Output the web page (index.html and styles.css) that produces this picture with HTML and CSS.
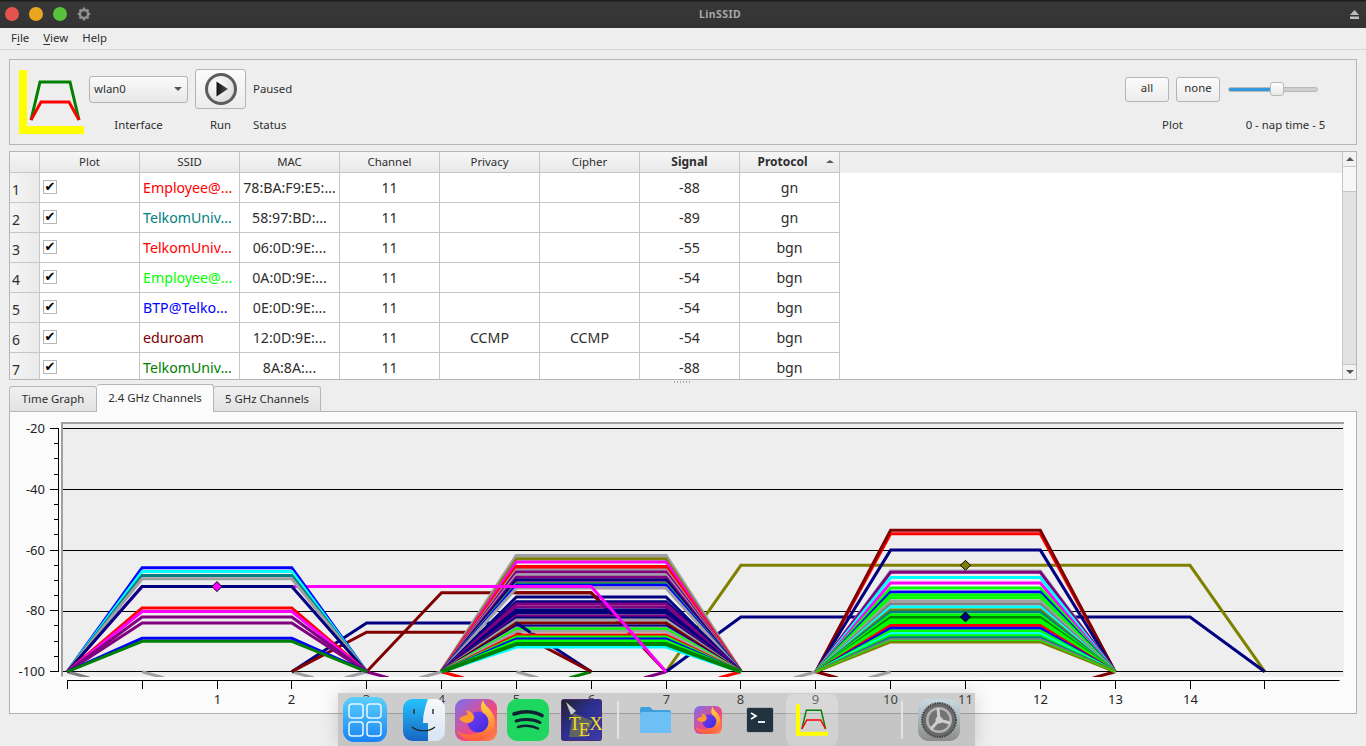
FILE: index.html
```html
<!DOCTYPE html>
<html lang="en">
<head>
<meta charset="utf-8">
<title>LinSSID</title>
<link rel="stylesheet" href="styles.css">
</head>
<body>
<header class="titlebar">
  <div class="lights">
    <span class="light red"></span><span class="light amber"></span><span class="light lime"></span>
    <svg class="gear" width="14" height="14" viewBox="0 0 14 14"><circle cx="7" cy="7" r="4.1" fill="none" stroke="#8e8e8e" stroke-width="2.6"/><path d="M7 .6v2.4M7 11v2.4M.6 7H3M11 7h2.4M2.5 2.5l1.7 1.7M9.8 9.8l1.7 1.7M2.5 11.500l1.700-1.700M9.800 4.200l1.700-1.700" stroke="#8e8e8e" stroke-width="2.200"/></svg>
  </div>
  <div class="wintitle">LinSSID</div>
  <div class="winright">
    <svg class="eject" width="9" height="9" viewBox="0 0 9 9"><path d="M4.500 0 9 5H0zM0 6.500h9V9H0z" fill="#bdbdbd"/></svg>
  </div>
</header>
<nav class="menubar"><span>F<u>i</u>le</span><span><u>V</u>iew</span><span>Help</span></nav>

<section class="toolbox">
  <svg class="logo" width="65" height="64" viewBox="0 0 65 64"><path d="M0 0h8v56h57v8H0z" fill="#ff0"/><path d="M12 50 21 12h30l9 38" fill="none" stroke="#008000" stroke-width="3"/><path d="M12 50 22 32h28l10 18" fill="none" stroke="#f00" stroke-width="3"/></svg>
  <div class="combo"><span>wlan0</span><i class="arrow"></i></div>
  <button class="runbtn" type="button">
    <svg width="34" height="34" viewBox="0 0 34 34"><defs><radialGradient id="rb" cx=".4" cy=".35" r=".75"><stop offset="0" stop-color="#fff"/><stop offset="1" stop-color="#d6d6d6"/></radialGradient><linearGradient id="rt" x1="0" y1="0" x2="1" y2="0"><stop offset="0" stop-color="#111"/><stop offset="1" stop-color="#555"/></linearGradient></defs><circle cx="17" cy="17" r="14.500" fill="url(#rb)" stroke="#5c5c5c" stroke-width="3"/><path d="M12.500 9.500 24 17l-11.500 7.500z" fill="url(#rt)"/></svg>
  </button>
  <div class="status">Paused</div>
  <div class="spacer"></div>
  <div class="plotbtns"><button type="button">all</button><button type="button">none</button></div>
  <div class="slider"><div class="fill"></div><div class="knob"></div></div>
  <div class="lab">Interface</div>
  <div class="lab">Run</div>
  <div class="lab left">Status</div>
  <div></div>
  <div class="lab">Plot</div>
  <div class="lab">0 - nap time - 5</div>
</section>

<section class="tableframe">
  <div class="tablewrap">
    <table class="grid">
      <colgroup><col class="c0"><col><col><col><col><col><col><col><col></colgroup>
      <thead>
        <tr><th></th><th>Plot</th><th>SSID</th><th>MAC</th><th>Channel</th><th>Privacy</th><th>Cipher</th><th class="b">Signal</th><th class="b sorted">Protocol<i class="sort"></i></th></tr>
      </thead>
      <tbody>
        <tr><th>1</th><td class="chk"><span class="box">✔</span></td><td class="ssid red">Employee@...</td><td>78:BA:F9:E5:...</td><td>11</td><td></td><td></td><td>-88</td><td>gn</td></tr>
        <tr><th>2</th><td class="chk"><span class="box">✔</span></td><td class="ssid teal">TelkomUniv...</td><td>58:97:BD:...</td><td>11</td><td></td><td></td><td>-89</td><td>gn</td></tr>
        <tr><th>3</th><td class="chk"><span class="box">✔</span></td><td class="ssid red">TelkomUniv...</td><td>06:0D:9E:...</td><td>11</td><td></td><td></td><td>-55</td><td>bgn</td></tr>
        <tr><th>4</th><td class="chk"><span class="box">✔</span></td><td class="ssid lime">Employee@...</td><td>0A:0D:9E:...</td><td>11</td><td></td><td></td><td>-54</td><td>bgn</td></tr>
        <tr><th>5</th><td class="chk"><span class="box">✔</span></td><td class="ssid blue">BTP@Telko...</td><td>0E:0D:9E:...</td><td>11</td><td></td><td></td><td>-54</td><td>bgn</td></tr>
        <tr><th>6</th><td class="chk"><span class="box">✔</span></td><td class="ssid maroon">eduroam</td><td>12:0D:9E:...</td><td>11</td><td>CCMP</td><td>CCMP</td><td>-54</td><td>bgn</td></tr>
        <tr><th>7</th><td class="chk"><span class="box">✔</span></td><td class="ssid green">TelkomUniv...</td><td>8A:8A:...</td><td>11</td><td></td><td></td><td>-88</td><td>bgn</td></tr>
      </tbody>
    </table>
  </div>
  <div class="vscroll">
    <div class="sbtn"><i class="up"></i></div>
    <div class="thumb"></div>
    <div class="track"></div>
    <div class="sbtn"><i class="down"></i></div>
  </div>
</section>
<div class="splitter"><span></span></div>

<div class="tabs">
  <div class="tab">Time Graph</div>
  <div class="tab active">2.4 GHz Channels</div>
  <div class="tab">5 GHz Channels</div>
</div>
<main class="pane">
  <svg id="chart" class="chart" width="1346" height="301" viewBox="10 412 1346 301"></svg>
</main>

<aside class="dock">
  <svg class="di launch" width="44" height="45" viewBox="0 0 44 45"><defs><linearGradient id="lp" x1="0" y1="0" x2="0" y2="1"><stop offset="0" stop-color="#5ad0fc"/><stop offset="1" stop-color="#1a84f4"/></linearGradient></defs><rect width="44" height="45" rx="11" fill="url(#lp)"/><g fill="none" stroke="#e8f6ff" stroke-width="1.500"><rect x="6" y="7" width="14" height="14" rx="3"/><rect x="24" y="7" width="14" height="14" rx="3"/><rect x="6" y="25" width="14" height="14" rx="3"/><rect x="24" y="25" width="14" height="14" rx="3"/></g></svg>
  <svg class="di finder" width="42" height="42" viewBox="0 0 42 42"><defs><linearGradient id="fl" x1="0" y1="0" x2="0" y2="1"><stop offset="0" stop-color="#25c3fb"/><stop offset="1" stop-color="#1766c4"/></linearGradient><linearGradient id="fr" x1="0" y1="0" x2="0" y2="1"><stop offset="0" stop-color="#f8f8f8"/><stop offset="1" stop-color="#d6e4f4"/></linearGradient></defs><rect width="42" height="42" rx="9" fill="url(#fr)"/><path d="M9 0h16c-3 8-5 15-5 24h5v18H9a9 9 0 0 1-9-9V9a9 9 0 0 1 9-9z" fill="url(#fl)"/><path d="M11 10v5M30 10v5" stroke="#333" stroke-width="1.500"/><path d="M9 28c6 5 17 5 23 0" fill="none" stroke="#222" stroke-width="1.200"/></svg>
  <svg class="di fox" width="42" height="42" viewBox="0 0 42 42"><use href="#foxicon"/></svg>
  <svg class="di spot" width="42" height="42" viewBox="0 0 42 42"><rect width="42" height="42" rx="10" fill="#1ed760"/><g fill="none" stroke="#123" stroke-linecap="round"><path d="M7 15c9-3 20-3 28 1.500" stroke-width="3.600"/><path d="M9 22c8-2 17-2 24 1.500" stroke-width="3"/><path d="M11 28c7-2 14-1.500 20 1.500" stroke-width="2.500"/></g></svg>
  <svg class="di tex" width="41" height="42" viewBox="0 0 41 42"><defs><linearGradient id="tx" x1="0" y1="0" x2="1" y2="1"><stop offset="0" stop-color="#222"/><stop offset=".45" stop-color="#2b2f8f"/><stop offset="1" stop-color="#3d3aa8"/></linearGradient></defs><rect x=".5" y=".5" width="40" height="41" rx="2" fill="url(#tx)" stroke="#4d2a78"/><path d="M5 3l10 9-5 4z" fill="#c9c9c9"/><path d="M12 14l20 8-8 16H8z" fill="#8a8a3a" opacity=".55"/><text x="8" y="31" class="textt">T<tspan dx="-2" dy="6">E</tspan><tspan dx="-1" dy="-6">X</tspan></text></svg>
  <i class="dsep first"></i>
  <svg class="di folder" width="31" height="26" viewBox="0 0 31 26"><path d="M2 0h8l3 3h16a2 2 0 0 1 2 2v19a2 2 0 0 1-2 2H2a2 2 0 0 1-2-2V2a2 2 0 0 1 2-2z" fill="#3f9fdc"/><rect y="5" width="31" height="21" rx="2" fill="#6cc0f5"/></svg>
  <svg class="di fox2" width="28" height="28" viewBox="0 0 42 42"><use href="#foxicon"/></svg>
  <svg class="di term" width="28" height="26" viewBox="0 0 28 26"><rect x=".5" y=".5" width="27" height="25" rx="2" fill="#22323f" stroke="#aab4bd"/><path d="M5 6l5 3-5 3" fill="none" stroke="#fff" stroke-width="1.600"/><path d="M12 15h7" stroke="#fff" stroke-width="1.800"/></svg>
  <div class="activeapp"><svg width="32" height="32" viewBox="0 0 65 64"><path d="M0 0h8v56h57v8H0z" fill="#ff0"/><path d="M12 50 21 12h30l9 38" fill="none" stroke="#008000" stroke-width="3"/><path d="M12 50 22 32h28l10 18" fill="none" stroke="#f00" stroke-width="3"/></svg></div>
  <i class="dsep second"></i>
  <svg class="di prefs" width="42" height="42" viewBox="0 0 42 42"><defs><linearGradient id="pf" x1="0" y1="0" x2="0" y2="1"><stop offset="0" stop-color="#c8dbe2"/><stop offset="1" stop-color="#8b8b8b"/></linearGradient></defs><rect width="42" height="42" rx="10" fill="url(#pf)"/><circle cx="21" cy="21" r="17" fill="#6a6a6a" stroke="#444" stroke-width="2" stroke-dasharray="1.500 1"/><circle cx="21" cy="21" r="13" fill="#b4b4b4"/><circle cx="21" cy="21" r="10.500" fill="#737373"/><path d="M21 21l-1-12M21 21l11 3M21 21l-8 9" stroke="#cfcfcf" stroke-width="3"/><circle cx="21" cy="21" r="3.500" fill="#cfcfcf"/></svg>
  <svg class="defs" width="0" height="0"><defs>
    <linearGradient id="fxb" x1="0" y1="0" x2="1" y2="1"><stop offset="0" stop-color="#7a6ff0"/><stop offset=".6" stop-color="#f2487e"/><stop offset="1" stop-color="#ff8a3c"/></linearGradient>
    <linearGradient id="fxf" x1="0" y1="0" x2="0" y2="1"><stop offset="0" stop-color="#ffdf3d"/><stop offset="1" stop-color="#ff5a3c"/></linearGradient>
    <linearGradient id="fxc" x1="0" y1="0" x2="1" y2="1"><stop offset="0" stop-color="#7c3cf0"/><stop offset="1" stop-color="#3a2be0"/></linearGradient>
    <g id="foxicon"><rect width="42" height="42" rx="9" fill="url(#fxb)"/><path d="M28 1c1 5 5 7 8 11 5 7 5 16 0 22-4 5-10 8-16 8-8 0-14-4-18-10 5 3 11 5 18 3 7-2 11-8 10-15-1-6-4-8-4-12 0-3 1-5 2-7z" fill="url(#fxf)"/><circle cx="23" cy="23" r="10.500" fill="url(#fxc)"/><path d="M4 20c3-3 6-4 9-4l-2-5c4 1 7 3 8 6 1 3-2 7-6 7-4 0-7-2-9-4z" fill="#ff9a2c"/></g>
  </defs></svg>
</aside>
<script src="chart.js"></script>
</body>
</html>
```

FILE: styles.css
```css
* { box-sizing: border-box; }
html, body { margin: 0; height: 746px; overflow: hidden; }
body { background: #eee; font: 11.4px "Noto Sans", sans-serif; color: #2e2e2e; position: relative; }
u { text-underline-offset: 2px; }
button { font: inherit; color: inherit; }

.titlebar { height: 28px; background: linear-gradient(#2a2a2a, #383838 8%, #333); border-top: 1px solid #1c1c1c; display: flex; align-items: center; padding: 0 7px 1px 5px; }
.lights { flex: 1; display: flex; align-items: center; gap: 10px; }
.light { width: 14px; height: 14px; border-radius: 50%; }
.light.red { background: #e5534f; }
.light.amber { background: #e9a51f; }
.light.lime { background: #57c13c; }
.wintitle { font-size: 10.5px; font-weight: 700; color: #a8a8a8; letter-spacing: .4px; margin-left: 76px; }
.winright { flex: 1; display: flex; justify-content: flex-end; }

.menubar { height: 22px; border-bottom: 1px solid #d6d6d6; display: flex; gap: 14px; padding: 0 0 0 11px; line-height: 20px; }
.menubar span { display: block; }

.toolbox { margin: 9px 9px 0; height: 86px; border: 1px solid #b6b6b6; padding: 9px 12px 0 9px; display: grid; grid-template-columns: 63px 99px 51px auto 1fr 95px 117px; grid-template-rows: 40px 22px; column-gap: 7px; row-gap: 4px; align-items: center; }
.logo { grid-row: 1 / 3; align-self: start; margin-top: 1px; overflow: visible; }
.combo { height: 27px; border: 1px solid #b4b4b4; border-radius: 3px; background: linear-gradient(#fafafa, #e8e8e8); display: flex; align-items: center; justify-content: space-between; padding: 0 5px 2px 4px; }
.arrow { width: 0; height: 0; border: 4px solid transparent; border-top: 4px solid #555; border-bottom: 0; margin-top: 2px; }
.status { padding-bottom: 2px; }
.runbtn { height: 40px; padding: 0; border: 1px solid #b4b4b4; border-radius: 3px; background: linear-gradient(#fbfbfb, #ececec); display: flex; align-items: center; justify-content: center; }
.plotbtns { display: flex; gap: 7px; }
.plotbtns button { width: 45px; height: 25px; padding: 0 0 3px; border: 1px solid #b4b4b4; border-radius: 3px; background: linear-gradient(#fbfbfb, #ececec); }
.slider { width: 90px; height: 5px; margin-left: 1px; background: #cfcfcf; border: 1px solid #b8b8b8; border-radius: 3px; position: relative; }
.fill { width: 44px; height: 100%; background: #3398dc; border-radius: 3px; }
.knob { position: absolute; left: 41px; top: -6px; width: 14px; height: 14px; background: linear-gradient(#fff, #e8e8e8); border: 1px solid #b8b8b8; border-radius: 3px; }
.lab { text-align: center; white-space: nowrap; }
.lab.left { text-align: left; }

.tableframe { margin: 6px 9px 0; height: 229px; border: 1px solid #b6b6b6; display: flex; overflow: hidden; }
.tablewrap { flex: 1; overflow: hidden; background: linear-gradient(#eee 21px, #fff 21px); }
.grid { border-collapse: separate; border-spacing: 0; table-layout: fixed; width: 830px; font-size: 14.2px; }
.c0 { width: 30px; }
.grid thead th { height: 21px; font-size: 11.4px; font-weight: 400; padding: 0 0 2px; background: linear-gradient(#f6f6f6, #e9e9e9); border-right: 1px solid #c6c6c6; border-bottom: 1px solid #c6c6c6; position: relative; }
.grid thead th.b { font-size: 12px; font-weight: 700; }
.grid thead th.sorted { padding-right: 14px; }
.sort { position: absolute; right: 5px; top: 8px; width: 0; height: 0; border: 4px solid transparent; border-bottom: 3px solid #555; border-top: 0; }
.grid td, .grid tbody th { height: 30px; padding: 0; border-right: 1px solid #c6c6c6; border-bottom: 1px solid #c6c6c6; text-align: center; white-space: nowrap; overflow: hidden; font-weight: 400; }
.grid tbody th { background: linear-gradient(90deg, #f4f4f4, #eaeaea); text-align: left; padding: 3px 0 0 2px; font-size: 14px; }
.grid td.ssid { text-align: left; padding-left: 3px; }
.red { color: #f00; } .teal { color: #008080; } .lime { color: #0f0; } .blue { color: #00f; } .maroon { color: #800000; } .green { color: #008000; }
.grid td.chk { text-align: left; padding-left: 3px; }
.box { display: block; width: 14px; height: 14px; border: 1px solid #b8b8b8; background: #fff; color: #000; font: 13px/12px "DejaVu Sans", sans-serif; text-align: center; margin-top: -1px; }

.vscroll { width: 14px; border-left: 1px solid #c6c6c6; display: flex; flex-direction: column; }
.sbtn { height: 14px; background: #f2f2f2; display: flex; align-items: center; justify-content: center; flex: none; }
.up { width: 0; height: 0; border: 4px solid transparent; border-bottom: 4px solid #555; border-top: 0; }
.down { width: 0; height: 0; border: 4px solid transparent; border-top: 4px solid #555; border-bottom: 0; }
.thumb { height: 26px; flex: none; background: #f7f7f7; border: solid #c6c6c6; border-width: 1px 0; }
.track { flex: 1; background: #e2e2e2; border-bottom: 1px solid #c6c6c6; }

.splitter { height: 4px; display: flex; justify-content: center; align-items: flex-start; padding-top: 1px; }
.splitter span { width: 18px; height: 2px; background: repeating-linear-gradient(90deg, #aaa 0 1px, transparent 1px 3px); }

.tabs { display: flex; height: 28px; padding-left: 9px; align-items: flex-end; position: relative; z-index: 1; margin-bottom: -1px; }
.tab { width: 107px; height: 26px; padding-top: 4px; text-align: center; background: linear-gradient(#f0f0f0, #e2e2e2); border: 1px solid #b6b6b6; border-left: 0; border-radius: 3px 3px 0 0; }
.tab:first-child { width: 88px; border-left: 1px solid #b6b6b6; }
.tab.active { width: 117px; height: 28px; padding-top: 5px; background: #fbfbfb; border-bottom: 0; }

.pane { margin: 0 9px; height: 303px; background: #fbfbfb; border: 1px solid #b0b0b0; }
.chart { display: block; }
.chart text { font: 13px "Noto Sans", sans-serif; fill: #222; }

.dock { position: absolute; left: 338px; top: 693px; width: 637px; height: 53px; display: flex; align-items: center; background: rgba(120, 120, 120, .35); box-shadow: 0 0 18px rgba(0, 0, 0, .16); }
.di { flex: none; display: block; }
.launch { margin-left: 5px; }
.finder { margin-left: 16px; }
.fox { margin-left: 10px; }
.spot { margin-left: 10px; }
.tex { margin-left: 12px; }
.dsep { flex: none; width: 2px; height: 38px; background: #e3e3e3; }
.dsep.first { margin-left: 15px; }
.folder { margin-left: 21px; }
.fox2 { margin-left: 23px; }
.term { margin-left: 24px; }
.activeapp { margin-left: 12px; width: 52px; height: 52px; margin-top: 1px; background: rgba(255, 255, 255, .22); border-radius: 8px; display: flex; align-items: center; justify-content: center; }
.dsep.second { margin-left: 63px; }
.prefs { margin-left: 15px; }
.defs { position: absolute; }
.textt { font: 19px "Liberation Serif", serif !important; fill: #f2d92a !important; }
```

FILE: chart.js
```js
// Draws the 2.4 GHz channel plot: one trapezoid per access point.
var NS = 'http://www.w3.org/2000/svg';
var svg = document.getElementById('chart');
var C = { r:'#ff0000', g:'#00ff00', b:'#0000ff', c:'#00ffff', m:'#ff00ff', dr:'#800000', dg:'#008000', n:'#000080', t:'#008080', p:'#800080', o:'#808000', gy:'#a0a0a4', dg2:'#808080' };
function X(c) { return 142.1 + 74.85 * c; }
function Y(db) { return 428.5 + (-20 - db) * 3.04; }
function el(name, attrs, parent) {
  var e = document.createElementNS(NS, name);
  for (var k in attrs) e.setAttribute(k, attrs[k]);
  (parent || svg).appendChild(e);
  return e;
}
var defs = el('defs', {});
var clip = el('clipPath', { id: 'plotclip' }, defs);
el('rect', { x: 63, y: 424, width: 1281, height: 253 }, clip);

// plot background and frame
el('rect', { x: 63, y: 424, width: 1281, height: 252.5, fill: '#eeeeee' });
el('path', { d: 'M62 676.5V423H1344', fill: 'none', stroke: '#a0a0a0', 'stroke-width': 2 });

// grid
[428, 489, 550, 611, 671].forEach(function (y) {
  el('path', { d: 'M63 ' + (y + .5) + 'H1343', stroke: '#000', 'stroke-width': 1 });
});

// left axis
var ax = 'M58.5 428V672';
for (var i = 0; i <= 16; i++) {
  var y = Math.round(428 + i * 15.19) + .5;
  ax += 'M' + (i % 4 === 0 ? 50 : 54) + ' ' + y + 'H59';
}
el('path', { d: ax, stroke: '#000', 'stroke-width': 1, fill: 'none' });
[-20, -40, -60, -80, -100].forEach(function (v, n) {
  var t = el('text', { x: 45, y: 433 + n * 60.8, 'text-anchor': 'end' });
  t.textContent = v;
});

// bottom axis
var bx = 'M67 680.5H1339.500';
for (var c = -1; c <= 15; c++) {
  var x = Math.round(X(c) - .45) + .5;
  bx += 'M' + x + ' 680V689';
  if (c >= 1 && c <= 14) {
    var tx = el('text', { x: x, y: 703.5, 'text-anchor': 'middle' });
    tx.textContent = c;
  }
}
el('path', { d: bx, stroke: '#000', 'stroke-width': 1, fill: 'none' });

var plot = el('g', { 'clip-path': 'url(#plotclip)', fill: 'none', 'stroke-width': 3, 'stroke-linejoin': 'miter' });
function line(pts, col, w) {
  el('polyline', { points: pts.map(function (p) { return p[0].toFixed(1) + ',' + p[1].toFixed(1); }).join(' '), stroke: C[col] || col, 'stroke-width': w || 3 }, plot);
}
function trap(c, db, col, w) {
  line([[X(c - 2), Y(-100)], [X(c - 1), Y(db)], [X(c + 1), Y(db)], [X(c + 2), Y(-100)]], col, w);
}
function wide(c0, c1, db, col) {
  line([[X(c0), Y(-100)], [X(c0 + 1), Y(db)], [X(c1 - 1), Y(db)], [X(c1), Y(-100)]], col);
}
function stub(c, dx, col) {
  line([[X(c), Y(-100)], [X(c) + dx, Y(-100) + Math.abs(dx) * .28]], col);
}

// clipped stubs of the weakest networks, below the -100 line
[[-1, 22, 'dg2'], [0, 22, 'gy'], [2, 22, 'gy'], [3, -22, 'gy'], [3, 22, 'p'], [4, -22, 'gy'], [4, 22, 'r'], [5, 22, 'gy'], [6, -22, 'dg'], [7, -22, 'p'], [8, -22, 'r'], [9, -22, 'gy'], [9, 22, 'dr'], [10, -22, 'gy'], [13, -22, 'dr']].forEach(function (s) {
  stub(s[0], s[1], s[2]);
});

// neighbours of channel 6, underneath it
wide(7, 15, -65, 'o');
wide(7, 15, -82, 'n');
trap(4, -84, 'n');
trap(4, -87, 'dr');
trap(5, -74, 'dr');

// channel 6
[[-61.9, 'gy', 4], [-62.9, 'o'], [-63.9, 'm'], [-65.6, 'r', 4], [-66.5, 'gy'], [-67.2, 'p'], [-68.2, 'gy'], [-68.9, 'p'], [-69.8, 'n'], [-70.8, 'p'], [-71.2, 'g'], [-71.5, 'b'], [-72.5, 'gy'], [-75.4, 'n'], [-77, 'n'], [-77.7, 'p'], [-78.7, 'p'], [-79.7, 'n'], [-80.7, 'n'], [-81.7, 'p'], [-82.3, 'n'], [-83, 'gy'], [-84, 'dr'], [-85, 'n'], [-85.6, 'gy'], [-86, 'g'], [-86.7, 'gy'], [-87.9, 'r'], [-88.6, 'g'], [-89.2, 'b'], [-89.9, 'g'], [-91.9, 'c'], [-90.9, 'dg', 4]].forEach(function (l) { trap(6, l[0], l[1], l[2]); });

// the parts of channel 5 and channel 4 that lie over channel 6
line([[X(4) + 75, Y(-74)], [X(6), Y(-74)], [X(6) + 8, Y(-74) + 8]], 'dr');
line([[X(5), Y(-84)], [X(5) + 14, Y(-84) + 9.5]], 'n');

// 40 MHz magenta network, over channel 6 and under channel 1
line([[X(-1), Y(-100)], [X(0), Y(-72)], [X(6), Y(-72)], [X(7), Y(-100)]], 'm');

// channel 1
[[-65.8, 'b'], [-67, 'c'], [-68.4, 't'], [-69.4, 'gy'], [-72, 'n'], [-79, 'r'], [-80.2, 'm'], [-82, 'p'], [-84, 'p'], [-89, 'b'], [-90, 'dg']].forEach(function (l) { trap(1, l[0], l[1], l[2]); });

// channel 11
[[-54.6, 'r'], [-53.5, 'dr'], [-60, 'n'], [-66.9, 'gy'], [-67.3, 'p'], [-69, 'c'], [-70.8, 'm'], [-72.5, 'g'], [-73.8, 'b'], [-74.8, 'g'], [-75.7, 'g'], [-76.7, 'gy'], [-77.7, 'dg2'], [-78.7, 'c'], [-79.7, 'o'], [-80.4, 't'], [-81.3, 'g'], [-82.2, 'dg'], [-83, 'g'], [-83.8, 'g'], [-84.8, 'r'], [-85.7, 'b'], [-86.6, 'g'], [-87.5, 'c'], [-88.2, 'g'], [-88.8, 't'], [-89.5, 'dg2'], [-90.2, 'o'], [-89.7, 'g', 1]].forEach(function (l) { trap(11, l[0], l[1], l[2]); });

// markers
[[1, -72, 'm'], [11, -65, 'o'], [11, -82, 'n']].forEach(function (d) {
  var x = X(d[0]), y = Y(d[1]);
  el('path', { d: 'M' + x + ' ' + (y - 5) + 'l5 5-5 5-5-5z', fill: C[d[2]], stroke: '#000', 'stroke-width': 1 }, plot);
});
```
